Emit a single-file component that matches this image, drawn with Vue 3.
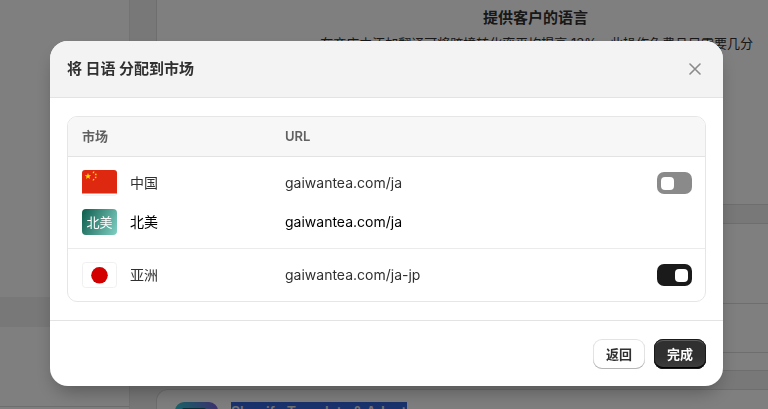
<script setup>
import { ref } from "vue";

const open = ref(true);

const markets = ref([
  { id: "cn", name: "中国", url: "gaiwantea.com/ja", toggle: true, enabled: false },
  { id: "na", name: "北美", url: "gaiwantea.com/ja", toggle: false, child: true },
  { id: "asia", name: "亚洲", url: "gaiwantea.com/ja-jp", toggle: true, enabled: true },
]);

// 关闭弹窗
const close = () => {
  open.value = false;
};
</script>

<template>
  <div class="page">
    <aside class="sidebar">
      <div class="nav-current"></div>
      <div class="nav-footer"></div>
    </aside>
    <main class="content">
      <section class="card intro">
        <h2>提供客户的语言</h2>
        <p>在商店中添加翻译可将跨境转化率平均提高 13%。此操作免费且只需要几分</p>
      </section>
      <section class="card languages">
        <div class="lang-head"></div>
        <div class="lang-row"></div>
      </section>
      <section class="card app">
        <svg class="app-logo" width="43" height="43" viewBox="0 0 43 43">
          <defs>
            <linearGradient id="appBg" x1="0" y1="0" x2="1" y2="0">
              <stop offset="0" stop-color="#32c8d2" />
              <stop offset="1" stop-color="#7a62e0" />
            </linearGradient>
          </defs>
          <rect width="43" height="43" rx="9" fill="url(#appBg)" />
          <rect x="7" y="6" width="24" height="28" rx="2" fill="#14586e" />
        </svg>
        <span class="app-name">Shopify Translate &amp; Adapt</span>
      </section>
    </main>
  </div>

  <div v-if="open" class="overlay">
    <div class="modal" role="dialog" aria-labelledby="modal-title">
      <header class="modal-header">
        <h1 id="modal-title">将 日语 分配到市场</h1>
        <button class="close" aria-label="关闭" @click="close">
          <svg width="12" height="12" viewBox="0 0 12 12">
            <path d="M1 1 L11 11 M11 1 L1 11" stroke="#8a8a8a" stroke-width="1.6" stroke-linecap="round" />
          </svg>
        </button>
      </header>

      <div class="modal-body">
        <table>
          <thead>
            <tr>
              <th class="col-market">市场</th>
              <th>URL</th>
              <th class="col-toggle"></th>
            </tr>
          </thead>
          <tbody>
            <tr v-for="market in markets" :key="market.id" :class="{ child: market.child }">
              <td>
                <label class="market" :for="market.toggle ? 'toggle-' + market.id : null">
                  <svg v-if="market.id === 'cn'" class="flag" width="35" height="26" viewBox="0 0 35 26">
                    <path d="M0 21 V23 Q0 25.5 3 25.5 H32 Q35 25.5 35 23 V21" fill="#fff" stroke="#f3f3f3" />
                    <path d="M0 3 Q0 0 3 0 H32 Q35 0 35 3 V23.4 H0 Z" fill="#de2910" />
                    <path d="M6 2.9 L6.8 5.2 L9.2 5.2 L7.3 6.7 L8 9 L6 7.6 L4 9 L4.7 6.7 L2.8 5.2 L5.2 5.2 Z" fill="#ffde00" />
                    <g fill="#ffde00">
                      <path d="M11.2 1.5 L12.7 1.8 L12 2.5 L12.2 3.5 L11.3 3 L10.5 3.3 Z" />
                      <path d="M13.5 3.6 L15 4 L14.2 4.7 L14.3 5.7 L13.5 5.1 L12.7 5.3 Z" />
                      <path d="M13.6 6.5 L15 7 L14.1 7.6 L14.1 8.6 L13.4 7.9 L12.6 8 Z" />
                      <path d="M11.3 8.8 L12.6 9.2 L11.9 9.9 L12 10.8 L11.2 10.3 L10.4 10.5 Z" />
                    </g>
                  </svg>
                  <span v-else-if="market.id === 'na'" class="flag badge">北美</span>
                  <svg v-else class="flag" width="35" height="26" viewBox="0 0 35 26">
                    <rect x="0.5" y="0.5" width="34" height="25" rx="3" fill="#fff" stroke="#f0f0f0" />
                    <circle cx="17.5" cy="13.3" r="8.3" fill="#d30000" />
                  </svg>
                  <span>{{ market.name }}</span>
                </label>
              </td>
              <td>{{ market.url }}</td>
              <td>
                <input
                  v-if="market.toggle"
                  :id="'toggle-' + market.id"
                  v-model="market.enabled"
                  type="checkbox"
                  class="switch"
                />
              </td>
            </tr>
          </tbody>
        </table>
      </div>

      <footer class="modal-footer">
        <button class="btn" @click="close">返回</button>
        <button class="btn primary" @click="close">完成</button>
      </footer>
    </div>
  </div>
</template>

<style>
body {
  background-color: #f1f1f1;
  font-family: Inter, "Noto Sans CJK SC", sans-serif;
  color: #303030;
}
</style>

<style scoped>
* {
  box-sizing: border-box;
}

h1,
h2,
p {
  margin: 0;
}

.page {
  display: flex;
  height: 100vh;
  overflow: hidden;
}

.sidebar {
  flex: 0 0 130px;
  padding-top: 297px;
  background-color: #fff;
  border-right: 1px solid #e6e6e6;
}

.nav-current {
  height: 30px;
  background-color: #f1f1f1;
}

.nav-footer {
  margin-top: 79px;
  border-top: 1px solid #dcdcdc;
}

.content {
  flex: 1;
  min-width: 0;
  padding-left: 26px;
}

.card {
  margin-bottom: 18px;
  background-color: #fff;
  border: 1px solid #dcdcdc;
  border-right: none;
}

.intro {
  height: 205px;
  padding-top: 8px;
  padding-right: 15px;
  border-top: none;
  text-align: center;
  white-space: nowrap;
}

.intro h2 {
  padding-left: 161px;
  font-size: 15px;
  line-height: 20px;
}

.intro p {
  margin-top: 5px;
  font-size: 13px;
  line-height: 20px;
  text-align: right;
}

.languages {
  height: 148px;
}

.lang-head {
  height: 80px;
  border-bottom: 1px solid #dcdcdc;
}

.lang-row {
  height: 49px;
  border-bottom: 1px solid #dcdcdc;
}

.app {
  display: flex;
  align-items: flex-start;
  gap: 13px;
  height: 80px;
  padding: 12px 18px;
  border-radius: 12px 0 0 12px;
}

.app-logo {
  flex: none;
}

.app-name {
  height: 20px;
  background-color: #3466dc;
  color: #e3e3e3;
  font-size: 14px;
  font-weight: 600;
  line-height: 20px;
}

.overlay {
  position: fixed;
  inset: 0;
  padding: 41px 45px 0 50px;
  background-color: rgba(0, 0, 0, 0.5);
}

.modal {
  overflow: hidden;
  background-color: #fff;
  border-radius: 18px;
  box-shadow: 0 10px 20px -6px rgba(0, 0, 0, 0.35);
}

.modal-header {
  display: flex;
  align-items: center;
  justify-content: space-between;
  height: 57px;
  padding: 0 16px 0 17px;
  background-color: #f3f3f3;
  border-bottom: 1px solid #e3e3e3;
}

.modal-header h1 {
  font-size: 15px;
  line-height: 20px;
}

.close {
  display: flex;
  padding: 6px;
  background: none;
  border: none;
  cursor: pointer;
}

.modal-body {
  padding: 18px 17px;
}

table {
  width: 100%;
  table-layout: fixed;
  border: 1px solid #e6e6e6;
  border-radius: 10px;
  border-spacing: 0;
  overflow: hidden;
  font-size: 14px;
  line-height: 20px;
}

th {
  height: 40px;
  padding: 0 14px 2px;
  background-color: #f7f7f7;
  border-bottom: 1px solid #e3e3e3;
  color: #616161;
  font-size: 13px;
  font-weight: 600;
  text-align: left;
}

.col-market {
  width: 203px;
}

.col-toggle {
  width: 62px;
}

td {
  height: 52px;
  padding: 13px 13px 13px 14px;
}

.child td {
  height: 40px;
  padding-top: 0;
  border-bottom: 1px solid #ebebeb;
  color: #000;
}

.market {
  display: flex;
  align-items: center;
  gap: 13px;
}

.flag {
  flex: none;
}

.badge {
  width: 35px;
  height: 26px;
  border-radius: 4px;
  background: linear-gradient(115deg, #0d5c4c, #80d0c4);
  color: #fff;
  font-size: 13px;
  line-height: 26px;
  text-align: center;
}

.switch {
  display: flex;
  align-items: center;
  width: 35px;
  height: 22px;
  margin: 0;
  padding: 0 4px;
  appearance: none;
  background-color: #8a8a8a;
  border-radius: 7px;
  cursor: pointer;
}

.switch::before {
  content: "";
  width: 13px;
  height: 13px;
  background-color: #fff;
  border-radius: 4px;
}

.switch:checked {
  justify-content: flex-end;
  background-color: #1a1a1a;
}

.modal-footer {
  display: flex;
  justify-content: flex-end;
  gap: 9px;
  padding: 18px 17px 17px;
  border-top: 1px solid #e3e3e3;
}

.btn {
  width: 52px;
  height: 30px;
  padding: 0 0 2px;
  background-color: #fff;
  border: none;
  border-radius: 9px;
  box-shadow: inset 0 -1px 0 #b5b5b5, inset 0 0 0 1px #e3e3e3;
  color: #303030;
  font-family: inherit;
  font-size: 13px;
  font-weight: 700;
  cursor: pointer;
}

.primary {
  background: linear-gradient(#303030 60%, #404040);
  box-shadow: inset 0 0 0 1px #1a1a1a, inset 0 2px 0 #5c5c5c, inset 0 -2px 0 #000;
  color: #fff;
}
</style>
